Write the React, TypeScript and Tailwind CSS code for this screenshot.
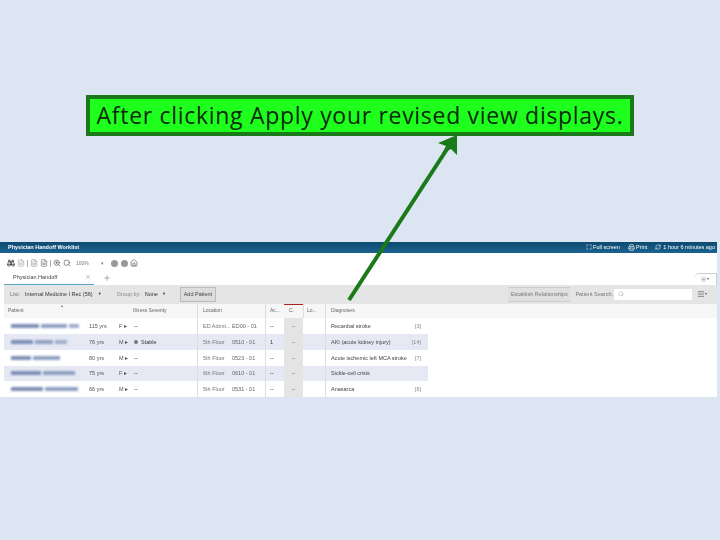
import React from "react";
import { Binoculars, FileText, Printer, Search, ZoomIn, Home, Maximize, RefreshCw, Menu, X, Plus } from "lucide-react";

const patients = [
  { nameA: 28, nameB: 26, nameC: 10, age: "115 yrs", sex: "F", severity: "--", loc: "ED Admit...", room: "ED00 - 01", ac: "--", diag: "Recanbal stroke", tag: "[3]" },
  { nameA: 22, nameB: 18, nameC: 12, age: "76 yrs", sex: "M", severity: "Stable", loc: "5th Floor", room: "0510 - 01", ac: "1", diag: "AKI (acute kidney injury)", tag: "[14]" },
  { nameA: 20, nameB: 27, nameC: 0, age: "80 yrs", sex: "M", severity: "--", loc: "5th Floor", room: "0523 - 01", ac: "--", diag: "Acute ischemic left MCA stroke", tag: "[7]" },
  { nameA: 30, nameB: 32, nameC: 0, age: "75 yrs", sex: "F", severity: "--", loc: "6th Floor", room: "0610 - 01", ac: "--", diag: "Sickle-cell crisis", tag: "" },
  { nameA: 32, nameB: 33, nameC: 0, age: "66 yrs", sex: "M", severity: "--", loc: "5th Floor", room: "0531 - 01", ac: "--", diag: "Anasarca", tag: "[6]" },
];

const rowGrid = "grid grid-cols-[85px_30px_14px_64px_35px_33px_19px_19px_22px_103px] items-center";

export default function App() {
  return (
    <div className="relative w-[720px] h-[540px] overflow-hidden bg-[#dce6f2] pt-[242px] font-['Liberation_Sans',Arial,sans-serif]">
      {/* callout */}
      <div className="absolute left-[86px] top-[95px] w-[548px] h-[41px] border-4 border-[#1a7a1a] bg-[#1eff1e] flex items-center justify-center">
        <span className="text-[23px] leading-none tracking-[0.7px] whitespace-nowrap text-[#0a2a0a] font-['Open_Sans',sans-serif]">
          After clicking Apply your revised view displays.
        </span>
      </div>

      {/* worklist */}
      <div className="w-[717px] h-[155px] bg-white flex flex-col blur-[0.5px]">
        <div className="h-[11px] bg-gradient-to-b from-[#0d4a70] to-[#1b6390] flex items-center justify-between pl-2 pr-[2px] text-white text-[5.5px] whitespace-nowrap">
          <span className="font-bold">Physician Handoff Worklist</span>
          <div className="flex items-center gap-[8px]">
            <span className="flex items-center gap-[1px]"><Maximize size={6} />Full screen</span>
            <span className="flex items-center gap-[1px]"><Printer size={7} />Print</span>
            <span className="flex items-center gap-[2px]"><RefreshCw size={6} />1 hour 6 minutes ago</span>
          </div>
        </div>

        <div className="h-[32px] relative flex flex-col pl-[7px]">
          <div className="h-[15px] flex items-center gap-[2px] text-[#555] mt-[3px]">
            <Binoculars size={8} className="text-[#222]" />
            <FileText size={8} className="text-[#aaa]" />
            <span className="w-px h-[7px] bg-[#aaa]" />
            <FileText size={8} className="text-[#999]" />
            <FileText size={8} className="text-[#777]" />
            <span className="w-px h-[7px] bg-[#aaa]" />
            <ZoomIn size={8} />
            <Search size={8} />
            <span className="ml-[3px] w-[28px] flex justify-between text-[5px] text-[#777]"><span>100%</span><span>▾</span></span>
            <span className="ml-[5px] w-[7px] h-[7px] rounded-full bg-[#999]" />
            <span className="ml-[1px] w-[7px] h-[7px] rounded-full bg-[#999]" />
            <Home size={8} />
          </div>
          <div className="flex items-center h-[14px]">
            <div className="-ml-[3px] w-[90px] h-[14px] flex items-center justify-between pl-[9px] pr-[3px] border-b border-[#5ba3c7] text-[5.5px] text-[#444]">
              <span>Physician Handoff</span>
              <X size={6} className="text-[#888]" />
            </div>
            <Plus size={8} className="ml-[9px] text-[#888]" />
          </div>
          <div className="absolute right-0 bottom-0 w-[23px] h-[12px] border-t border-r border-[#ccc] rounded-tl-[6px] flex items-center justify-center gap-[1px] text-[#666]">
            <Menu size={5} /><span className="text-[4px]">▾</span>
          </div>
        </div>

        <div className="ml-[4px] h-[19px] bg-[#e5e5e5] flex items-center justify-between pl-[6px] pr-[9px] text-[5.5px] whitespace-nowrap text-[#555]">
          <div className="flex items-center">
            <span className="text-[#777]">List:</span>
            <span className="ml-[5px] text-[#333]">Internal Medicine I Rec (56)</span>
            <span className="ml-[5px] text-[4px] text-[#333]">▼</span>
            <span className="ml-[15px] text-[#888]">Group by:</span>
            <span className="ml-[4px] text-[#333]">None</span>
            <span className="ml-[4px] text-[4px] text-[#333]">▼</span>
            <span className="ml-[14px] h-[15px] w-[36px] flex items-center justify-center border border-[#bbb] bg-[#ddd] text-[#444]">Add Patient</span>
          </div>
          <div className="flex items-center">
            <span className="h-[15px] w-[62px] flex items-center justify-center border-t border-b border-[#ccc] bg-[#e0e0e0] text-[#777]">Establish Relationships</span>
            <span className="ml-[5px] text-[#777]">Patient Search:</span>
            <div className="ml-[1px] w-[78px] h-[11px] bg-white flex items-center pl-[4px]"><Search size={6} className="text-[#aaa]" /></div>
            <Menu size={8} className="ml-[5px] text-[#555]" />
            <span className="mr-[1px] text-[4px]">▾</span>
          </div>
        </div>

        <div className={`${rowGrid} ml-[4px] h-[15px] bg-[#f6f6f6] text-[5px] text-[#666] whitespace-nowrap`}>
          <span className="relative pl-[4px]">
            Patient
            <span className="absolute left-[57px] -top-[4px] text-[4px] text-[#777]">▴</span>
          </span>
          <span />
          <span />
          <span>Illness Severity</span>
          <span className="pl-[5px] h-full flex items-center border-l border-[#ddd]">Location</span>
          <span className="h-full" />
          <span className="pl-[4px] h-full flex items-center border-l border-[#ddd]">Ac...</span>
          <span className="relative h-full flex items-center pl-[5px]">
            <span className="absolute left-0 right-0 top-0 h-[1px] bg-[#b02020]" />C.
          </span>
          <span className="pl-[3px] h-full flex items-center border-l border-[#ddd]">Lo...</span>
          <span className="pl-[5px] h-full flex items-center border-l border-[#ddd]">Diagnoses</span>
        </div>

        {patients.map((p, i) => (
          <div key={i} className={`${rowGrid} ml-[4px] h-[16px] w-[424px] text-[5.5px] text-[#555] whitespace-nowrap ${i % 2 === 1 ? "bg-[#e6e9f4]" : "bg-white"}`}>
            <div className="pl-[7px] flex items-center gap-[2px] blur-[1px]">
              <span className="h-[4px] bg-[#7c8fb5]" style={{ width: p.nameA }} />
              <span className="h-[4px] bg-[#8fa0c2]" style={{ width: p.nameB }} />
              {p.nameC > 0 && <span className="h-[4px] bg-[#a0aecb]" style={{ width: p.nameC }} />}
            </div>
            <span>{p.age}</span>
            <span>{p.sex} ▸</span>
            <span className="flex items-center gap-[3px] pl-[1px] text-[#333]">
              {p.severity === "Stable" && <span className="w-[4px] h-[4px] rounded-full bg-[#777]" />}
              {p.severity}
            </span>
            <span className="pl-[5px] h-full flex items-center border-l border-[#ddd] text-[#777]">{p.loc}</span>
            <span className="text-[#666]">{p.room}</span>
            <span className="pl-[4px] h-full flex items-center border-l border-[#ddd] text-[#333]">{p.ac}</span>
            <span className="h-full flex items-center justify-center bg-[#e4e4e4] text-[#666]">--</span>
            <span className="h-full" />
            <span className="pl-[5px] pr-[7px] h-full flex items-center justify-between border-l border-[#ddd] text-[#444]">
              <span>{p.diag}</span>
              <span className="text-[#888]">{p.tag}</span>
            </span>
          </div>
        ))}
      </div>

      {/* arrow */}
      <svg className="absolute left-0 top-0 pointer-events-none" width="720" height="540" viewBox="0 0 720 540">
        <line x1="349" y1="300" x2="449" y2="146" stroke="#1a7a1a" strokeWidth="4" />
        <path d="M457 135 L438 143 L446 146 L442 154 L451 149 L457 155 Z" fill="#1a7a1a" />
      </svg>
    </div>
  );
}
